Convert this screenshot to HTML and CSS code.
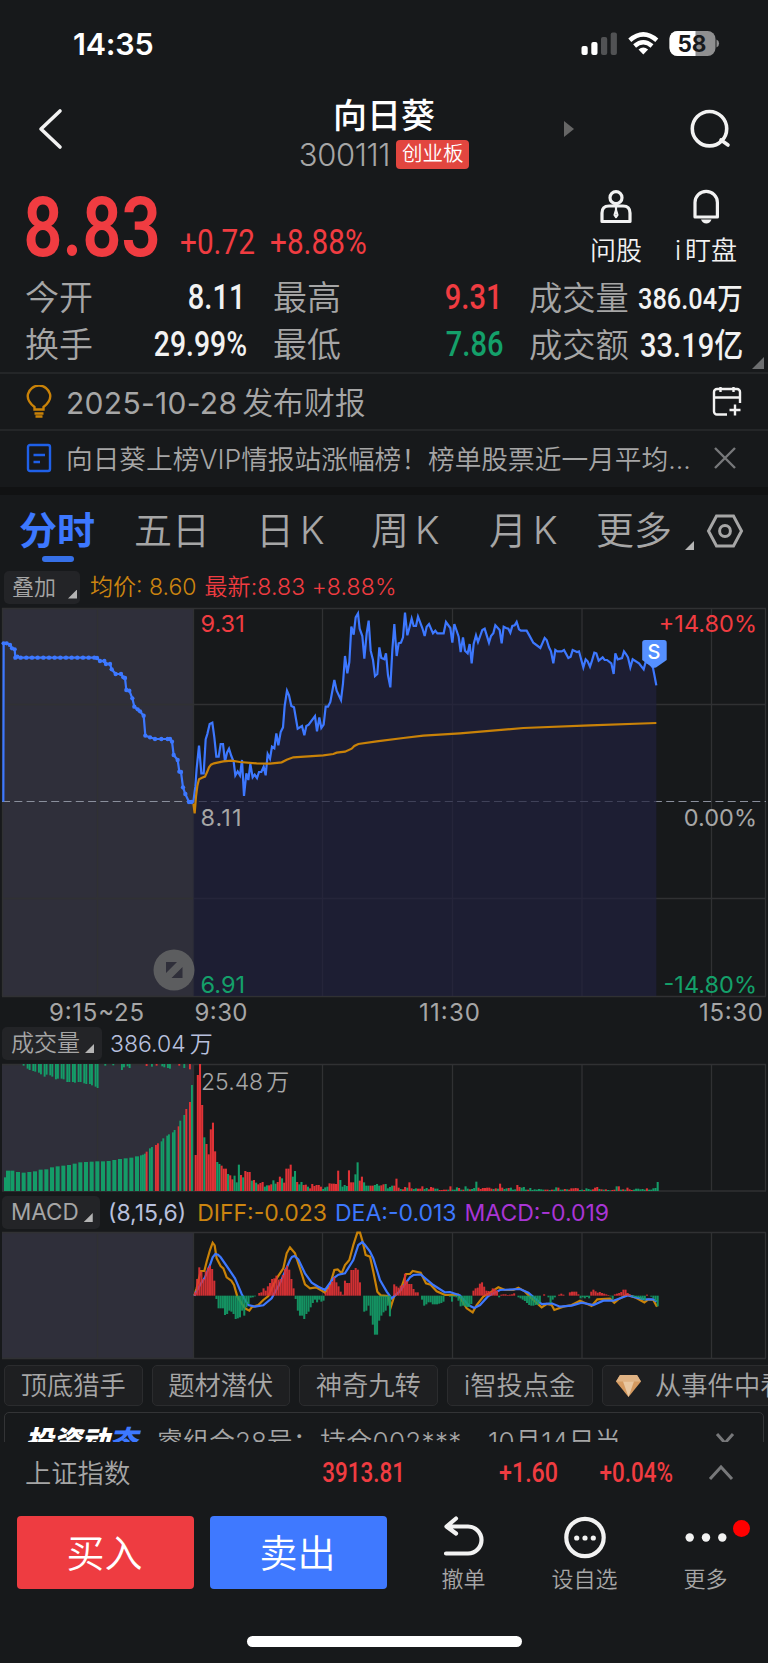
FILE: index.html
```html
<!DOCTYPE html>
<html lang="zh-CN">
<head>
    <meta charset="UTF-8">
    <meta name="viewport" content="width=device-width, initial-scale=1.0">
    <title>向日葵 300111</title>
    <link rel="stylesheet" href="styles.css">
</head>
<body>

    <div class="status-bar">
        <span class="time">14:35</span>
        <svg class="status-icons" width="140" height="28" viewBox="580 30 140 28">
            <g fill="#fff">
                <rect x="581.5" y="46" width="6.2" height="9" rx="2"/>
                <rect x="591.3" y="42" width="6.2" height="13" rx="2"/>
                <rect x="601" y="37" width="6.2" height="18" rx="2" opacity=".25"/>
                <rect x="610.7" y="32.5" width="6.2" height="22.5" rx="2" opacity=".25"/>
                <path d="M643.3 54.5 L638.5 49.5 Q643.3 45.5 648.1 49.5Z"/>
            </g>
            <path d="M629.8 40.2 Q643.3 28.5 656.8 40.2" fill="none" stroke="#fff" stroke-width="4.6"/>
            <path d="M634.6 46 Q643.3 38.5 652 46" fill="none" stroke="#fff" stroke-width="4.4"/>
            <rect x="669.5" y="31" width="46" height="25" rx="8" fill="#8f8f90"/>
            <path d="M677.5 31 H695.5 V56 H677.5 a8 8 0 0 1 -8 -8 V39 a8 8 0 0 1 8 -8Z" fill="#fff"/>
            <path d="M716.5 39.5 q2.6 1 2.6 4 t-2.6 4Z" fill="#8f8f90"/>
            <text x="692" y="51.6" class="battery">58</text>
        </svg>
    </div>

    <header>
        <svg class="back" width="30" height="44" viewBox="0 0 30 44"><path d="M24 4 L5 22 L24 40"/></svg>
        <div class="title">
            <h1>向日葵</h1>
            <p><span class="code">300111</span><span class="board">创业板</span></p>
        </div>
        <svg class="next" width="10" height="16" viewBox="0 0 10 16"><path d="M0 0 L10 8 L0 16Z"/></svg>
        <svg class="search" width="44" height="44" viewBox="0 0 44 44"><circle cx="21.5" cy="21.7" r="17.2"/><path d="M33 33 L40 38"/></svg>
    </header>

    <section class="quote">
        <div class="price-row">
            <span class="price din">8.83</span>
            <span class="change din">+0.72</span>
            <span class="change din">+8.88%</span>
            <div class="tool ask">
                <svg width="34" height="36" viewBox="0 0 34 36">
                    <circle cx="17" cy="8.7" r="6"/>
                    <path d="M3 32.5 V24 q0 -7 7 -7 H24 q7 0 7 7 V32.5Z"/>
                    <path d="M17 18 v3 l-1.5 5 1.5 2.2 1.5 -2.2 -1.5 -5" stroke-width="2.2"/>
                </svg>
                <span>问股</span>
            </div>
            <div class="tool watch">
                <svg width="34" height="36" viewBox="0 0 34 36">
                    <path d="M6 28 V13.5 a11.2 11.2 0 0 1 22.4 0 V28Z"/>
                    <path class="solid" d="M12 30.5 H22.5 q-1.5 4 -5.2 4 t-5.3 -4Z"/>
                </svg>
                <span>i<i></i>盯盘</span>
            </div>
        </div>
        <div class="stats">
            <span>今开</span><b class="din">8.11</b>
            <span>最高</span><b class="din up">9.31</b>
            <span>成交量</span><b class="din wan">386.04万</b>
            <span>换手</span><b class="din">29.99%</b>
            <span>最低</span><b class="din down">7.86</b>
            <span>成交额</span><b class="din yi">33.19亿</b>
        </div>
        <i class="corner"></i>
    </section>

    <div class="notice report">
        <svg width="26" height="34" viewBox="0 0 26 34"><path d="M8.5 24.5 V22 C1 16 1.5 11 2 9 a11.4 11.4 0 0 1 22 0 C24.5 11 25 16 17.5 22 V24.5Z M8.5 28.5 H17.5 M9.5 31.5 H16.5"/></svg>
        <p><span class="date">2025-10-28</span>发布财报</p>
        <svg class="calendar" width="30" height="34" viewBox="0 0 30 34"><path d="M15 29.5 H5 a3 3 0 0 1 -3 -3 V7 a3 3 0 0 1 3 -3 H25 a3 3 0 0 1 3 3 V18 M2 12.5 H28 M8.5 2 V7 M21.5 2 V7 M23 19.5 V30.5 M17.5 25 H28.5"/></svg>
    </div>
    <div class="notice rank">
        <svg width="26" height="34" viewBox="0 0 26 34"><rect x="2" y="4" width="22" height="26" rx="2"/><path d="M7.5 14 H19 M7.5 21 H14"/></svg>
        <p>向日葵上榜VIP情报站涨幅榜！榜单股票近一月平均...</p>
        <svg class="close" width="24" height="24" viewBox="0 0 24 24"><path d="M2 2 L22 22 M22 2 L2 22"/></svg>
    </div>

    <nav class="tabs">
        <a class="active">分时</a>
        <a>五日</a>
        <a>日<em>K</em></a>
        <a>周<em>K</em></a>
        <a>月<em>K</em></a>
        <a class="more">更多</a>
        <i class="tri"></i>
        <svg width="38" height="36" viewBox="0 0 38 36"><path d="M10.5 3 H27.5 L35.5 18 L27.5 33 H10.5 L2.5 18Z"/><circle cx="19" cy="18" r="5.4"/></svg>
    </nav>

    <div class="legend overlay">
        <span class="pick">叠加<i class="tri"></i></span>
        <span class="avg">均价: 8.60</span>
        <span class="last">最新:8.83 +8.88%</span>
    </div>

    <svg class="chart" id="price" width="768" height="419" viewBox="0 606 768 419">
        <rect class="auction" x="2" y="608" width="191" height="388"/>
        <path class="grid" d="M2 608.5 H766 M2 704.5 H766 M2 898.5 H766 M2 996.5 H766 M97.5 608 V996 M193.5 608 V996 M322.5 608 V996 M452.5 608 V996 M582 608 V996 M711.5 608 V996 M765.5 608 V996 M2.5 608 V996"/>
        <path class="mid" d="M2 801.5 H766"/>
        <g id="price-lines"></g>
        <path class="flag" d="M645 640 H664 q2.7 0 2.7 2.7 V660 L656 667.5 L653 668 L642.2 660 V642.7 q0 -2.7 2.8 -2.7Z"/>
        <text class="flag-text" x="654" y="659" text-anchor="middle">S</text>
        <circle cx="174" cy="970" r="20.5" fill="#5c5d5f"/>
        <path d="M166 962 H177 L166 973Z M182.5 967 V978 H171.5Z" fill="#2f2f3a"/>
        <g class="axis">
            <text class="up" x="200.5" y="631.5">9.31</text>
            <text x="200.5" y="826" textLength="41">8.11</text>
            <text class="down" x="200.5" y="993">6.91</text>
            <text class="up" x="757" y="631.5" text-anchor="end">+14.80%</text>
            <text x="757" y="826" text-anchor="end">0.00%</text>
            <text class="down" x="757" y="993" text-anchor="end">-14.80%</text>
        </g>
        <g class="axis hours">
            <text x="49" y="1021" textLength="95">9:15~25</text>
            <text x="194.5" y="1021" textLength="53">9:30</text>
            <text x="419" y="1021" textLength="61">11:30</text>
            <text x="699" y="1021" textLength="64">15:30</text>
        </g>
    </svg>

    <div class="legend vol">
        <span class="pick">成交量<i class="tri"></i></span>
        <span class="pale">386.04<em>万</em></span>
    </div>
    <svg class="chart" width="768" height="131" viewBox="0 1062 768 131">
        <rect class="auction" x="2" y="1064" width="191" height="127"/>
        <path class="grid" d="M2 1064.5 H766 M2 1191 H766 M97.5 1064 V1191 M193.5 1064 V1191 M322.5 1064 V1191 M452.5 1064 V1191 M582 1064 V1191 M711.5 1064 V1191 M765.5 1064 V1191"/>
        <g id="volume-bars"></g>
        <text class="axis small" x="201" y="1090">25.48<tspan dx="3">万</tspan></text>
    </svg>

    <div class="legend macd">
        <span class="pick">MACD<i class="tri"></i></span>
        <span class="pale">(8,15,6)</span>
        <span class="avg">DIFF:-0.023</span>
        <span class="dea">DEA:-0.013</span>
        <span class="purple">MACD:-0.019</span>
    </div>
    <svg class="chart" width="768" height="131" viewBox="0 1230 768 131">
        <rect class="auction" x="2" y="1232" width="191" height="126"/>
        <path class="grid" d="M2 1232.5 H766 M2 1358.5 H766 M97.5 1232 V1358 M193.5 1232 V1358 M322.5 1232 V1358 M452.5 1232 V1358 M582 1232 V1358 M711.5 1232 V1358 M765.5 1232 V1358"/>
        <g id="macd-lines"></g>
    </svg>

    <div class="chips">
        <span>顶底猎手</span>
        <span>题材潜伏</span>
        <span>神奇九转</span>
        <span class="wide">i智投点金</span>
        <span class="gem">
            <svg width="25" height="22" viewBox="0 0 25 22"><path d="M4 0 H21 L25 6.5 L12.5 22 L0 6.5Z" fill="#d59a60"/><path d="M4 0 H21 L25 6.5 H0Z" fill="#e0b384"/><path d="M7 6.5 H18 L12.5 22Z" fill="#e9c7a0"/></svg>
            从事件中看
        </span>
    </div>

    <div class="news">
        <div class="news-card">
            <strong>投资动<u>态</u></strong>
            <span class="n1">睿组合28号：</span>
            <span class="n2">持仓002***</span>
            <span class="n3">10月14日当</span>
            <svg width="20" height="14" viewBox="0 0 20 14"><path d="M2 2 L10 11 L18 2"/></svg>
        </div>
    </div>

    <div class="index-row">
        <span class="name">上证指数</span>
        <b class="din i1">3913.81</b>
        <b class="din i2">+1.60</b>
        <b class="din i3">+0.04%</b>
        <svg width="26" height="18" viewBox="0 0 26 18"><path d="M2 15 L13 3 L24 15"/></svg>
    </div>

    <footer>
        <button class="buy">买入</button>
        <button class="sell">卖出</button>
        <div class="action">
            <svg width="44" height="44" viewBox="0 0 44 44"><path d="M4 38.5 H26 a13.5 13.5 0 0 0 0 -27 H5 M14 3.5 L4.5 11.5 L14 18.5"/></svg>
            <span>撤单</span>
        </div>
        <div class="action fav">
            <svg width="44" height="44" viewBox="0 0 44 44"><circle cx="22" cy="22.5" r="18.7"/><g class="solid"><circle cx="13.7" cy="23" r="2.6"/><circle cx="22" cy="23" r="2.6"/><circle cx="30.3" cy="23" r="2.6"/></g></svg>
            <span>设自选</span>
        </div>
        <div class="action more">
            <svg width="44" height="44" viewBox="0 0 44 44"><g class="solid"><circle cx="5.7" cy="22.5" r="4.2"/><circle cx="22" cy="22.5" r="4.2"/><circle cx="38.3" cy="22.5" r="4.2"/></g></svg>
            <span>更多</span>
            <i class="badge"></i>
        </div>
    </footer>
    <div class="home-bar"></div>

    <script src="charts.js"></script>
</body>
</html>
```
FILE: styles.css
```css
* {
    box-sizing: border-box;
}

body {
    margin: 0;
    width: 768px;
    height: 1663px;
    overflow: hidden;
    background: #17191b;
    color: #a6a6a6;
    font-family: Inter, "Noto Sans CJK SC", sans-serif;
    font-weight: 350;
}

h1, p {
    margin: 0;
}

em, i {
    font-style: normal;
}

svg {
    display: block;
    flex: none;
    fill: none;
}

.solid {
    fill: #f2f2f2;
    stroke: none;
}

.up {
    color: #f03c41;
    fill: #f03c41;
}

.down {
    color: #14a06a;
    fill: #14a06a;
}

/* narrow digits */
.din {
    font-family: Roboto, "Noto Sans CJK SC", sans-serif;
    font-weight: 500;
    white-space: nowrap;
    transform: scaleX(.83);
    transform-origin: right;
}

.tri {
    display: block;
    width: 9px;
    height: 9px;
    background: #b4b4b4;
    clip-path: polygon(100% 0, 100% 100%, 0 100%);
}

/* status bar */
.status-bar {
    display: flex;
    height: 78px;
    padding: 29px 48px 0 73px;
    justify-content: space-between;
}

.time {
    font-size: 30.5px;
    line-height: 30px;
    font-weight: 600;
    color: #fff;
    letter-spacing: -.2px;
}

.status-icons {
    margin-top: 1px;
}

.battery {
    font-size: 22.5px;
    font-weight: 700;
    text-anchor: middle;
    fill: #17191b;
}

/* title */
header {
    display: flex;
    height: 102px;
    padding-left: 36px;
}

header svg {
    stroke: #f2f2f2;
    stroke-width: 3.6;
    stroke-linecap: round;
    stroke-linejoin: round;
}

.back {
    margin-top: 29px;
}

.title {
    width: 400px;
    margin-left: 118px;
    text-align: center;
}

h1 {
    margin-top: 18px;
    font-size: 34px;
    line-height: 40px;
    font-weight: 500;
    color: #fff;
}

.title p {
    display: flex;
    justify-content: center;
    align-items: center;
    height: 36px;
    gap: 6px;
}

.code {
    font-size: 31px;
    letter-spacing: -.4px;
}

.board {
    width: 73px;
    height: 29px;
    border-radius: 4px;
    background: #e2463f;
    color: #fff;
    font-size: 20.5px;
    line-height: 28px;
    font-weight: 350;
}

header .next {
    margin: 43px 0 0 -20px;
    fill: #666;
    stroke: none;
}

.search {
    margin: 29px 0 0 114px;
}

/* quote */
.quote {
    position: relative;
    height: 194px;
    border-bottom: 2px solid #242628;
}

.price-row {
    display: flex;
    height: 94px;
}

.price-row .din {
    transform-origin: left;
    color: #f03c41;
}

.price {
    width: 152px;
    padding-left: 28px;
    font-size: 83px;
    line-height: 95px;
    font-weight: 600;
}

.change {
    width: 91px;
    margin-left: 28px;
    font-size: 35px;
    line-height: 125px;
}

.change.din {
    font-weight: 450;
    transform: scaleX(.85);
}

.change + .change {
    width: 130px;
    margin-left: -1px;
}

.tool {
    display: flex;
    flex-direction: column;
    align-items: center;
    width: 90px;
    padding-top: 9px;
    color: #f2f2f2;
    font-size: 26px;
    line-height: 30px;
    white-space: nowrap;
}

.tool svg {
    margin-bottom: 11px;
    stroke: #f2f2f2;
    stroke-width: 3.2;
    stroke-linejoin: round;
}

.tool i {
    display: inline-block;
    width: 4px;
}

.ask {
    margin-left: 171px;
}

.stats {
    display: grid;
    grid-template-columns: 90px 130px 106px 120px 128px 115px;
    grid-template-rows: 47px 47px;
    padding-left: 25px;
    align-items: center;
}

.stats span {
    font-size: 34px;
    line-height: 46px;
    white-space: nowrap;
}

.stats b {
    justify-self: end;
    margin-right: 0;
    font-size: 35px;
    color: #f2f2f2;
}

.stats b:nth-of-type(4) {
    margin-right: -2px;
    transform: scaleX(.81);
}

.stats .up {
    color: #f03c41;
    margin-right: -31px;
}

.stats .down {
    color: #14a06a;
    margin-right: -32px;
}

.stats span:nth-of-type(2), .stats span:nth-of-type(5) {
    padding-left: 28px;
}

.stats span:nth-of-type(3), .stats span:nth-of-type(6) {
    padding-left: 58px;
    font-size: 33.3px;
}

.stats .wan {
    margin: -4px -29px 0 0;
    font-size: 29.5px;
    transform: scaleX(.86);
}

.stats .yi {
    margin: -4px -29px 0 0;
    font-size: 33px;
    transform: scaleX(.88);
}

.corner {
    position: absolute;
    right: 4px;
    bottom: 3px;
    width: 12px;
    height: 12px;
    background: #6d6e70;
    clip-path: polygon(100% 0, 100% 100%, 0 100%);
}

/* notices */
.notice {
    display: flex;
    align-items: center;
    height: 57px;
    padding: 0 26px;
    border-bottom: 2px solid #242628;
}

.notice p {
    flex: 1;
    margin-left: 14px;
    white-space: nowrap;
}

.report {
    height: 57px;
}

.report p {
    margin-top: -2px;
    font-size: 30.8px;
}

.report svg {
    stroke: #c98208;
    stroke-width: 2.4;
}

.report .calendar {
    stroke: #f2f2f2;
}

.date {
    margin-right: 5px;
    font-size: 30px;
    font-weight: 400;
    letter-spacing: .3px;
}

.rank {
    height: 64px;
    border-bottom: 8px solid #111213;
}

.rank p {
    margin-top: -4px;
    font-size: 26.7px;
}

.rank svg {
    margin-top: -2px;
    stroke: #1f60e8;
    stroke-width: 2.4;
}

.rank .close {
    margin-right: 5px;
    stroke: #77787a;
}

/* tabs */
.tabs {
    display: flex;
    height: 73px;
    padding: 10px 0 0 19px;
    font-size: 38px;
    line-height: 50px;
}

.tabs a {
    width: 116px;
    white-space: nowrap;
}

.tabs em {
    margin-left: 6px;
}

.tabs a:nth-child(2) {
    width: 122px;
}

.tabs a:nth-child(3) {
    width: 115px;
}

.tabs a:nth-child(4) {
    width: 118px;
}

.tabs a:nth-child(5) {
    width: 107px;
}

.tabs .active {
    width: 115px;
    color: #3d78ff;
    font-weight: 600;
}

.tabs .active::after {
    content: "";
    display: block;
    width: 32px;
    height: 6px;
    margin: 1px 0 0 23px;
    border-radius: 3px;
    background: #3670e8;
}

.tabs .more {
    width: 78px;
}

.tabs .tri {
    margin: 36px 12px 0 11px;
}

.tabs svg {
    margin-top: 8px;
    stroke: #a6a6a6;
    stroke-width: 3;
}

/* chart legends */
.legend {
    display: flex;
    align-items: center;
    height: 37px;
    padding-left: 2px;
    font-size: 23px;
    line-height: 32px;
    white-space: nowrap;
}

.pick {
    display: flex;
    width: 100px;
    height: 33px;
    padding-left: 9px;
    border-radius: 5px;
    background: #232427;
}

.pick .tri {
    margin: 17px 0 0 5px;
}

.legend em {
    margin-left: 4px;
}

.overlay {
    height: 38px;
    padding-left: 4px;
}

.overlay .pick {
    width: 76px;
    margin-right: 10px;
    padding-left: 8px;
    font-size: 22px;
}

.overlay .pick .tri {
    margin: 19px 0 0 12px;
}

.avg {
    color: #cc8510;
}

.overlay .avg {
    margin-right: 8px;
}

.last {
    color: #f03c41;
    letter-spacing: .1px;
}

.vol .pick, .macd .pick {
    margin-right: 8px;
}

.pale {
    color: #b8c0de;
}

.macd {
    font-weight: 400;
    padding-top: 2px;
}

.macd .pick {
    width: 98px;
    font-size: 22.5px;
}

.macd .avg {
    margin-left: 11px;
}

.macd .dea, .macd .purple {
    margin-left: 8px;
}

.dea {
    color: #3d78ff;
}

.purple {
    color: #a935d6;
}

/* charts */
.chart {
    overflow: visible;
}

.auction {
    fill: #2f2f3a;
}

.grid {
    stroke: #303133;
    stroke-width: 1.3;
}

.mid {
    stroke: #8a8f9c;
    stroke-dasharray: 8 4.3;
}

.axis {
    font-size: 23.5px;
    font-weight: 400;
    fill: #a6a6a6;
}

.hours {
    font-size: 24px;
}

.small {
    font-size: 23px;
    font-weight: 350;
}

.area {
    fill: #21213d;
    fill-opacity: .7;
}

.blue {
    stroke: #3d78ff;
    stroke-width: 6.6;
}

.orange {
    stroke: #c98208;
    stroke-width: 6.6;
}

.flag {
    fill: #5590ff;
}

.flag-text {
    font-size: 20px;
    font-weight: 500;
    fill: #fff;
}

.bar-r {
    fill: #e03236;
}

.bar-g {
    fill: #149c68;
}

/* chips and news */
.chips {
    display: flex;
    gap: 9px;
    height: 45px;
    padding: 4px 0 0 4px;
    overflow: hidden;
}

.chips span {
    flex: none;
    width: 138.5px;
    height: 41px;
    border: 1px solid #2b2c2e;
    border-radius: 5px;
    background: #1e1f21;
    font-size: 26.3px;
    line-height: 39px;
    text-align: center;
    white-space: nowrap;
}

.chips .wide {
    width: 146.5px;
}

.chips .gem {
    display: flex;
    align-items: center;
    gap: 14px;
    width: 230px;
    padding-left: 13px;
}

.news {
    height: 36px;
    padding: 6px 4px 0;
    overflow: hidden;
}

.news-card {
    display: flex;
    height: 80px;
    padding: 13px 28px 0 20px;
    border: 1px solid #333436;
    border-radius: 5px;
    font-size: 26px;
    line-height: 31px;
    white-space: nowrap;
}

.news strong {
    width: 132px;
    color: #fff;
    font-size: 28px;
    font-weight: 900;
    font-style: italic;
}

.news u {
    color: #3d78ff;
    text-decoration: none;
}

.n1 {
    width: 163px;
}

.n2 {
    width: 168px;
    letter-spacing: .3px;
}

.n3 {
    flex: 1;
    letter-spacing: .3px;
}

.news svg, .index-row svg {
    stroke: #77787a;
    stroke-width: 3;
}

.news svg {
    margin-top: 6px;
}

/* index */
.index-row {
    display: flex;
    align-items: center;
    height: 62px;
    padding: 0 34px 0 25px;
    font-size: 26.3px;
}

.index-row .name {
    width: 250px;
    margin-top: -3px;
}

.index-row b {
    width: 130px;
    color: #f03c41;
    text-align: right;
    font-size: 27px;
}

.index-row .i2 {
    width: 153px;
    transform: scaleX(.86);
}

.index-row .i3 {
    width: 115px;
}

.index-row svg {
    margin-left: 35px;
}

/* bottom bar */
footer {
    display: flex;
    height: 132px;
    padding: 12px 0 0 17px;
}

button {
    width: 177px;
    height: 73px;
    margin-right: 16px;
    padding: 0 2px 4px 0;
    border: none;
    border-radius: 4px;
    color: #fff;
    font: inherit;
    font-size: 38px;
}

.buy {
    background: #ee3c41;
}

.sell {
    background: #3f79ff;
}

.action {
    position: relative;
    display: flex;
    flex-direction: column;
    align-items: center;
    width: 121px;
    font-size: 22px;
    line-height: 30px;
}

.action svg {
    margin: -1px 0 5px;
    stroke: #f2f2f2;
    stroke-width: 4.2;
    stroke-linejoin: round;
    stroke-linecap: round;
}

.badge {
    position: absolute;
    top: 4px;
    right: 16px;
    width: 17px;
    height: 17px;
    border-radius: 50%;
    background: #f00;
}

.home-bar {
    width: 275px;
    height: 11px;
    margin-left: 247px;
    border-radius: 6px;
    background: #fff;
}
```
FILE: charts.js
```js
// all series are kept on a fine grid, three units to a pixel
const price = "0,605 10,605 16,560 20,505 27,437 34,520 41,520 47,418 52,402 59,372 67,368 73,412 79,470 86,470 92,432 99,432 105,485 111,458 117,446 124,468 131,485 136,526 143,514 150,526 156,480 162,588 169,520 175,540 181,492 188,532 194,524 201,534 207,516 214,516 221,500 227,526 233,462 240,476 246,440 253,445 259,400 265,436 272,396 279,382 284,318 291,272 297,286 304,318 312,322 323,386 336,378 343,406 349,378 356,374 375,348 381,394 388,352 394,384 401,374 407,320 414,320 421,306 433,240 440,272 453,300 459,250 465,168 472,220 478,186 484,80 491,104 497,52 504,40 509,86 517,108 523,176 530,100 536,62 542,152 549,180 555,228 562,222 568,142 574,174 583,178 588,160 594,226 601,262 607,150 613,72 620,168 626,130 633,128 639,112 645,38 652,106 658,84 665,56 671,78 678,78 684,50 697,84 704,108 710,80 717,72 729,100 736,92 742,100 761,100 768,66 781,84 787,128 793,72 806,110 812,156 819,112 825,152 833,160 839,132 845,190 851,132 858,106 864,126 877,90 884,86 897,128 903,108 910,100 916,76 929,90 935,130 941,80 948,84 955,86 961,98 967,78 974,76 980,66 987,88 993,92 1010,92 1018,106 1030,128 1051,144 1058,128 1064,114 1070,120 1077,142 1083,154 1090,190 1096,150 1102,154 1115,154 1122,150 1135,174 1142,170 1148,150 1161,156 1167,154 1174,180 1180,202 1187,178 1193,184 1200,200 1206,182 1213,158 1219,160 1226,182 1238,172 1244,180 1251,180 1264,190 1271,222 1276,160 1283,178 1296,174 1302,154 1308,162 1314,172 1321,202 1328,178 1347,190 1361,208 1367,186 1380,190 1389,204 1393,224 1399,256";
const average = "10,610 14,640 18,590 22,558 27,538 36,533 45,530 51,517 57,502 63,494 72,490 100,484 125,482 150,486 200,490 240,491 275,487 290,479 310,472 400,466 430,462 440,458 465,455 485,446 493,438 505,432 560,424 640,414 700,407 810,400 1000,384 1200,376 1399,369";

const auction = [[10,605],[11,130],[20,130],[30,135],[36,145],[44,148],[46,173],[52,170]];
for (let x = 62; x <= 290; x += 17) auction.push([x, 173]);
auction.push([291,174],[300,183],[313,183],[318,192],[330,192],[335,208],[347,222],[363,222],[370,232],[375,234],[379,270],[388,272],[397,295],[403,320],[413,328],[420,334],[431,347],[436,407],[450,412],[465,417],[484,417],[503,417],[510,417],[516,425],[521,465],[533,480],[538,515],[543,516],[549,562],[556,582],[567,606],[574,606]);

const preBars = [[12,41],[18,61],[31,61],[48,57],[65,55],[82,57],[99,59],[116,64],[133,65],[150,71],[167,74],[184,76],[201,78],[218,82],[235,86],[252,87],[269,88],[286,89],[303,89],[320,90],[337,93],[354,96],[371,98],[388,100],[405,104]];
const preTail = "420g107 426g109 432g112 437r118 447g128 453g132 465r138 471r143 482g149 487g158 499g166 504g170 516g176 521g183 533r194 538g211 550g228 556r246 567r267 573g318";
const preTop = "68g5 80g14 86g18 97g21 103g23 114g26 120g31 131g38 137g32 148g34 154g38 165g46 171g44 182g44 188g46 199g54 205g54 216g54 222g56 233g54 239g54 250g58 256g60 267g60 273g64 284g68 290g72 313g5 337g4 363g18 369g10 380g7 386g12 437r6 453g8 467r5 484g7 490g10 501g12 507g14 535r5 550g12 567r16";
const volume = "r108 r348 r381 r258 g161 r141 r110 r185 r205 r119 g87 g81 r76 r67 r67 g51 r47 r35 g46 g26 g79 r48 g41 r60 r57 r57 g31 r33 g25 r20 r24 r27 g13 g17 r17 r20 g32 g22 r27 r43 g38 r25 r67 r67 r79 g43 g60 r27 g20 g27 r18 r19 g13 r8 r21 r15 r18 r18 r13 g6 g11 g13 r23 r22 r22 r21 r61 g33 g13 g18 g15 r62 r26 r26 g50 g86 r31 r43 g26 g16 g16 r16 r16 g18 g21 g16 r17 r20 g21 g8 g12 g16 r16 r37 r10 g6 r5 r12 g10 r26 r8 g6 g8 r7 r7 r14 g6 g9 r5 r12 r10 g7 g7 r3 r3 r4 r4 g4 r14 g4 g4 g11 r9 g4 r4 g14 g7 r5 g6 g9 g28 r10 r6 r9 r9 r10 r10 r7 g6 r8 g7 r22 r10 g6 g8 r9 g10 g4 g5 r18 r12 g10 g12 g4 r4 g9 g3 g5 g4 g6 g5 g4 r4 r4 g3 r4 g4 g11 r10 g4 g4 r6 g5 r4 r8 r8 r9 r8 g3 g4 r3 g8 g6 g4 r5 r10 r12 g6 r5 g4 r5 g3 g2 r3 r4 g14 r14 g4 r5 g4 r10 r5 r3 g4 g7 g7 g5 g6 g4 r8 g4 g4 g8 g9 g27";
const macd = "10 50 85 72 50 73 84 90 80 45 -10 -38 -38 -38 -58 -55 -45 -48 -55 -70 -68 -65 -45 -60 -35 -25 -6 -5 -2 0 8 10 22 15 28 38 50 52 60 48 50 62 80 90 78 50 22 -10 -45 -60 -60 -70 -55 -48 -35 -22 -12 -20 -12 -18 -15 10 20 32 42 55 40 28 12 3 45 38 38 77 77 83 78 40 0 -48 -45 -30 -60 -87 -117 -117 -75 -60 -50 -45 -30 -62 0 34 28 24 30 32 66 43 35 35 20 10 10 0 -12 -30 -26 -20 -20 -26 -26 -26 -24 -22 -18 0 0 -3 -18 -3 -5 -15 -32 -30 -32 -34 -34 -25 15 22 24 36 40 27 15 14 13 22 20 15 -5 3 4 4 2 3 4 7 0 -5 -8 -12 -16 -22 -28 -30 -30 -28 -28 -20 0 4 0 -5 -22 -12 -5 0 3 6 3 0 0 10 12 12 12 4 -8 -5 -8 -4 -8 12 18 13 9 11 8 6 4 2 -2 -10 4 6 8 11 18 18 8 3 -2 -4 -5 -6 -10 -12 -14 3 0 -3 -8 -16 -32";
const diff = "583,317 590,295 597,265 602,243 613,243 620,215 630,180 638,158 644,166 650,205 662,228 670,235 680,262 694,272 702,285 712,320 725,340 735,355 748,362 755,352 775,345 790,330 805,318 820,285 832,262 850,235 860,190 870,172 885,190 900,235 915,283 930,295 948,292 965,302 975,308 990,285 1003,240 1013,238 1025,250 1035,225 1048,210 1060,165 1072,128 1080,128 1088,155 1097,195 1110,200 1120,245 1132,305 1142,316 1165,318 1172,352 1183,318 1200,305 1218,252 1230,252 1238,243 1262,248 1278,280 1292,284 1310,304 1335,315 1375,314 1400,355 1418,367 1430,345 1450,320 1470,308 1495,292 1515,300 1540,300 1555,293 1575,305 1595,325 1625,352 1640,342 1655,345 1663,360 1690,350 1715,345 1740,332 1775,348 1792,328 1830,326 1843,338 1855,328 1880,314 1905,322 1933,337 1945,328 1960,330 1971,350";
const dea = "583,317 600,285 615,262 630,225 638,202 646,192 654,194 662,202 680,228 705,265 725,312 735,330 745,345 765,350 790,346 815,325 840,280 870,210 876,201 883,198 895,208 915,250 935,278 955,290 975,300 1000,265 1015,254 1035,250 1060,210 1075,165 1087,156 1095,165 1110,185 1120,205 1140,270 1160,305 1175,325 1200,303 1230,262 1240,255 1262,253 1300,285 1335,307 1350,306 1380,316 1405,345 1423,354 1440,345 1465,318 1500,300 1560,297 1585,308 1625,342 1655,340 1680,350 1715,347 1745,338 1780,345 1810,332 1840,332 1885,316 1910,323 1935,328 1960,328 1970,335";

function group(x, y, content) {
    return `<g transform="translate(${x} ${y}) scale(.33333)">${content}</g>`;
}

function line(points, color) {
    return `<polyline class="${color}" points="${points}"/>`;
}

function bar(x, y, w, h, color) {
    return `<rect class="bar-${color}" x="${x}" y="${y}" width="${w}" height="${h}"/>`;
}

// bars written as x, colour, height
function barList(text, top) {
    return text.split(" ").map(item => {
        const [, x, color, h] = item.match(/(\d+)([rg])(\d+)/);
        return bar(x, top ? 132 : 513 - h, 5.7, h, color);
    }).join("");
}

// price chart
const dots = auction.slice(1).map(p => `<circle cx="${p[0]}" cy="${p[1]}" r="6.5" fill="#3d78ff"/>`).join("");
document.getElementById("price-lines").innerHTML =
    group(190, 600, `<polygon class="area" points="10,1188 ${price.slice(6)} 1399,1188"/>` + line(price, "blue") + line(average, "orange")) +
    group(0, 600, line(auction.join(" "), "blue") + dots);

// volume chart
let bars = preBars.map(b => bar(b[0], 513 - b[1], b[0] < 15 ? 6 : 12, b[1], "g")).join("");
bars += barList(preTail, false) + barList(preTop, true);
volume.split(" ").forEach((item, i, all) => {
    const h = Number(item.slice(1));
    bars += bar(584 + i * 1386 / (all.length - 1), 513 - h, 6.2, h, item[0]);
});
document.getElementById("volume-bars").innerHTML = group(0, 1020, bars);

// macd chart
let columns = "";
macd.split(" ").map(Number).forEach((h, i, all) => {
    const x = 582 + i * 1388 / (all.length - 1);
    columns += bar(x, h > 0 ? 317 - h : 317, 6.1, Math.abs(h), h > 0 ? "r" : "g");
});
document.getElementById("macd-lines").innerHTML = group(0, 1190, line(diff, "orange") + line(dea, "blue") + `<g opacity=".92">${columns}</g>`);
```
